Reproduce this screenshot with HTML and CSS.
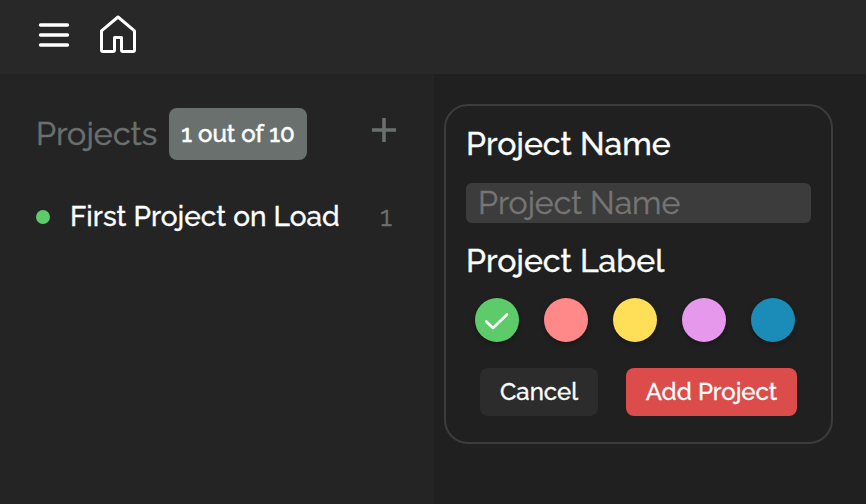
FILE: index.html
```
<!DOCTYPE html>
<html lang="en">
<head>
<meta charset="utf-8">
<title>Projects</title>
<link rel="stylesheet" href="styles.css">
</head>
<body>
<header class="topbar">
  <svg class="menu-icon" width="32" height="26" viewBox="0 0 32 26" fill="none" stroke="#fff" stroke-width="3.4" stroke-linecap="round"><path d="M2.5 3H29.5M2.5 13H29.5M2.5 23H29.5"/></svg>
  <svg class="home-icon" width="38" height="40" viewBox="0 0 38 40" fill="none" stroke="#fff" stroke-width="3" stroke-linejoin="round"><path d="M2.5 16.8L19 3L35.5 16.8V36Q35.5 37.5 34 37.5H24Q22.5 37.5 22.5 36V23.5H15.5V36Q15.5 37.5 14 37.5H4Q2.5 37.5 2.5 36Z"/></svg>
</header>
<div class="layout">
  <aside class="sidebar">
    <div class="heading">
      <h1 class="title">Projects</h1>
      <span class="badge">1 out of 10</span>
      <svg class="plus" width="24" height="24" viewBox="0 0 24 24" stroke="#69706e" stroke-width="3.6"><path d="M12 0V24M0 12H24"/></svg>
    </div>
    <div class="project">
      <span class="dot"></span>
      <span class="project-name">First Project on Load</span>
      <span class="count">1</span>
    </div>
  </aside>
  <main class="content">
    <form class="card">
      <label class="label label-name" for="name">Project Name</label>
      <input class="field" id="name" type="text" placeholder="Project Name">
      <div class="label label-color">Project Label</div>
      <div class="swatches">
        <span class="swatch green"><svg width="44" height="44" viewBox="0 0 44 44" fill="none" stroke="#fff" stroke-width="2.6" stroke-linecap="round" stroke-linejoin="round"><path d="M11.2 23.5L18 30L32 16.5"/></svg></span>
        <span class="swatch red"></span>
        <span class="swatch yellow"></span>
        <span class="swatch pink"></span>
        <span class="swatch blue"></span>
      </div>
      <div class="actions">
        <button class="btn cancel" type="button">Cancel</button>
        <button class="btn add" type="button">Add Project</button>
      </div>
    </form>
  </main>
</div>
</body>
</html>
```
FILE: styles.css
```
* { box-sizing: border-box; }
body {
  margin: 0;
  height: 504px;
  overflow: hidden;
  display: flex;
  flex-direction: column;
  background: #202020;
  color: #fafefd;
  font-family: Raleway, Lato, sans-serif;
  font-weight: 500;
  -webkit-text-stroke: 0.3px;
}
.topbar {
  height: 74px;
  flex: none;
  display: flex;
  align-items: flex-start;
  gap: 29px;
  padding: 14px 0 0 38px;
  background: #282828;
}
.menu-icon { margin-top: 8px; }
.layout { display: flex; flex: 1; }
.sidebar { width: 434px; padding: 34px 38px 0 36px; background: #242424; }
.heading { display: flex; align-items: center; height: 52px; }
.title {
  margin: 0;
  width: 133px;
  font-size: 32px;
  font-weight: 400;
  line-height: 50px;
  letter-spacing: 0.25px;
  white-space: nowrap;
  color: #69706e;
  -webkit-text-stroke: 0.6px;
}
.badge {
  width: 138px;
  height: 52px;
  border-radius: 8px;
  background: #69706e;
  text-align: center;
  font-size: 24px;
  line-height: 52px;
  white-space: nowrap;
  -webkit-text-stroke: 0.5px;
}
.plus { margin: -8px 0 0 auto; }
.project { display: flex; align-items: center; height: 40px; margin-top: 37px; }
.dot { width: 14px; height: 14px; border-radius: 50%; background: #5dcb6a; }
.project-name { margin-left: 20px; font-size: 28px; line-height: 40px; white-space: nowrap; }
.count { margin-left: auto; margin-right: 4px; font-size: 28px; font-weight: 400; color: #69706e; line-height: 40px; }
.content { flex: 1; padding: 30px 0 0 10px; }
.card {
  width: 389px;
  height: 340px;
  padding: 18px 20px 0;
  border: 2px solid #3c3c3c;
  border-radius: 24px;
}
.label { display: block; font-size: 32px; line-height: 40px; white-space: nowrap; }
.field {
  display: block;
  width: 345px;
  height: 40px;
  margin: 19px 0 18px;
  padding: 0 12px 2px;
  border: 0;
  border-radius: 6px;
  background: #3c3c3c;
  color: #fafefd;
  font: 400 32px/38px Raleway, Lato, sans-serif;
  -webkit-text-stroke: 0.4px;
}
.field::placeholder { color: #757575; }
.swatches { display: flex; gap: 25px; margin: 17px 0 0 9px; }
.swatch { width: 44px; height: 44px; border-radius: 50%; box-shadow: 0 2px 5px rgba(0, 0, 0, 0.3); }
.swatch svg { display: block; }
.green { background: #5dcb6a; }
.red { background: #ff8989; }
.yellow { background: #ffdf57; }
.pink { background: #e699ec; }
.blue { background: #1b8bb7; }
.actions { display: flex; gap: 28px; margin: 26px 0 0 14px; }
.btn {
  height: 48px;
  padding: 0 0 1px;
  border: 0;
  border-radius: 8px;
  color: #fafefd;
  font: 500 24px/46px Raleway, Lato, sans-serif;
  white-space: nowrap;
  -webkit-text-stroke: 0.3px;
}
.cancel { width: 118px; background: #2c2c2c; }
.add { width: 171px; background: #db4c4b; }
```
